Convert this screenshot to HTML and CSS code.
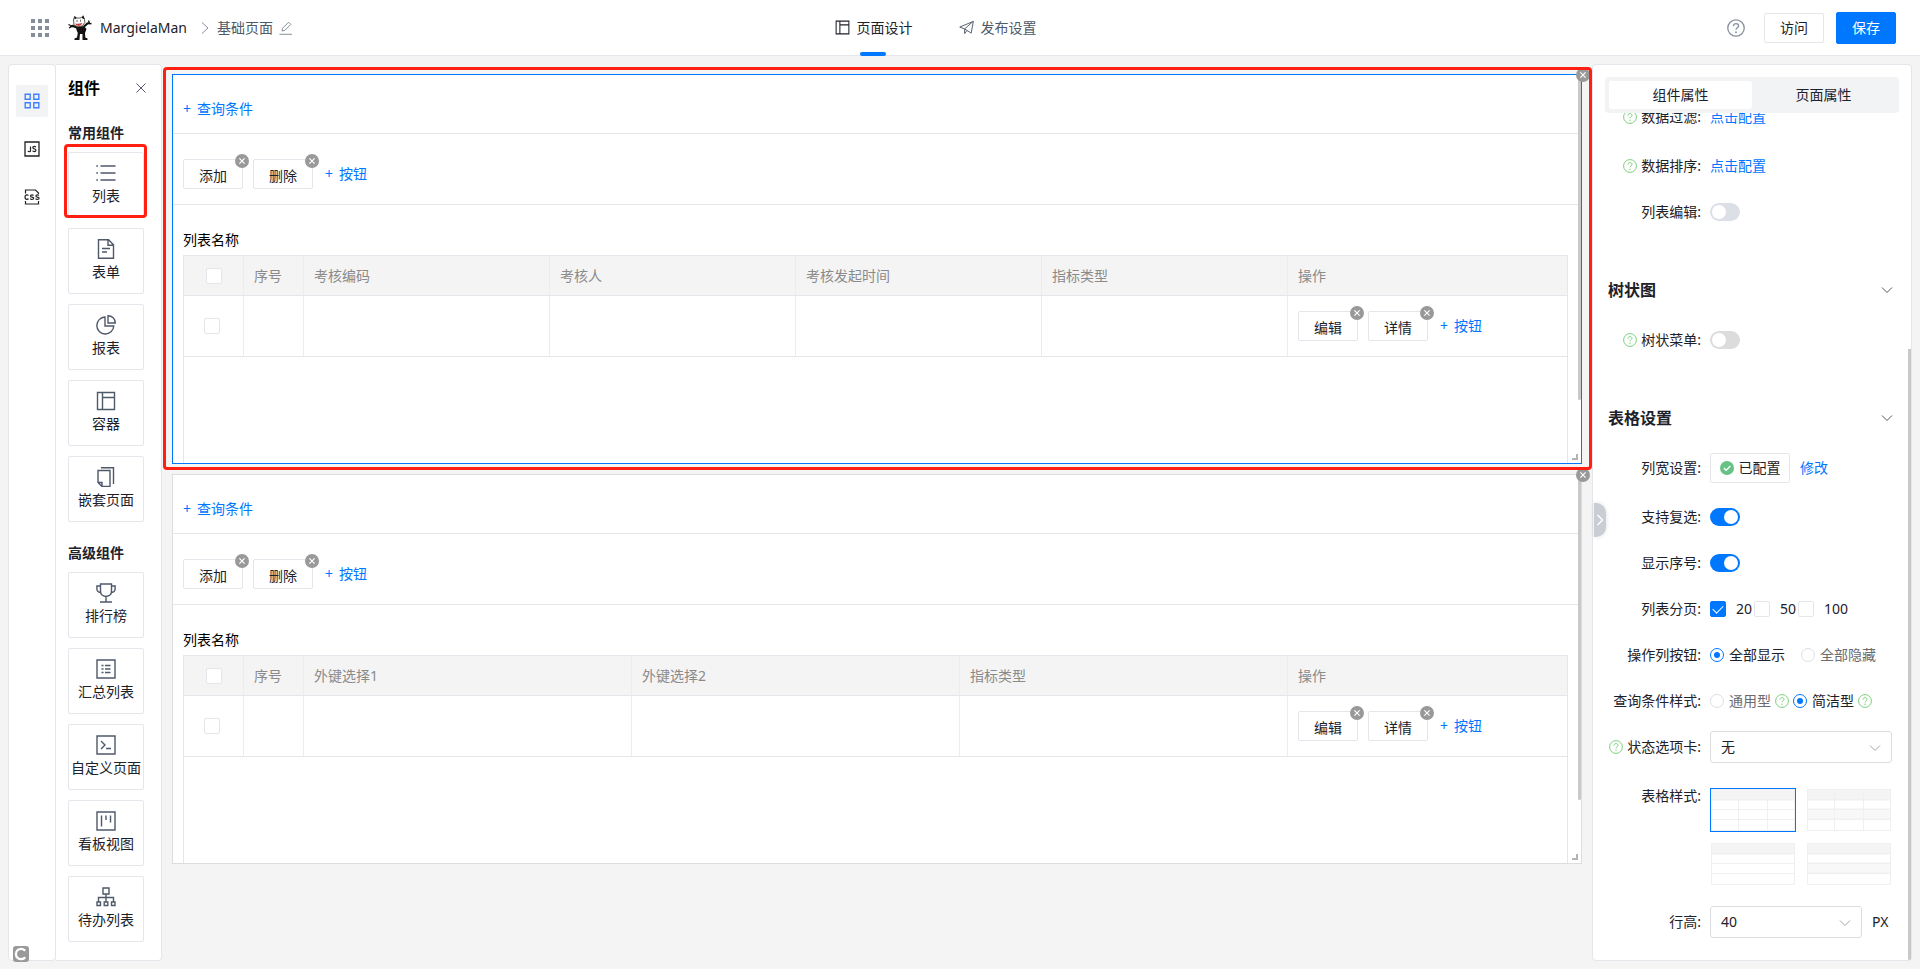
FILE: index.html
```html
<!DOCTYPE html>
<html lang="zh-CN">
<head>
<meta charset="utf-8">
<title>基础页面</title>
<link rel="stylesheet" href="styles.css">
</head>
<body>
<svg class="defs" aria-hidden="true">
  <symbol id="i-close" viewBox="0 0 14 14"><circle cx="7" cy="7" r="7" fill="#999"/><path d="M4.400 4.400l5.200 5.200M9.600 4.400l-5.200 5.200" stroke="#fff" stroke-width="1.200" fill="none"/></symbol>
  <symbol id="i-help" viewBox="0 0 14 14"><g fill="none" stroke="currentColor"><circle cx="7" cy="7" r="6.400"/><path d="M5 5.600c0-2.800 4-2.600 4-.2C9 6.800 7 6.800 7 8.400"/></g><circle cx="7" cy="10.300" r=".7" fill="currentColor"/></symbol>
  <symbol id="i-down" viewBox="0 0 12 12"><path d="M1 3.500l5 5 5-5" fill="none" stroke="currentColor"/></symbol>
  <symbol id="i-layout" viewBox="0 0 20 20"><path d="M1.500 1.500h17v17h-17zM6.500 1.500v17M6.500 6.500h12" fill="none" stroke="currentColor" stroke-width="1.400"/></symbol>
</svg>

<header class="topbar">
  <div class="brand">
    <svg class="dots" viewBox="0 0 18 18" fill="#86909c"><path d="M0 0h4v4H0zM7 0h4v4H7zM14 0h4v4h-4zM0 7h4v4H0zM7 7h4v4H7zM14 7h4v4h-4zM0 14h4v4H0zM7 14h4v4H7zM14 14h4v4h-4z"/></svg>
    <svg class="logo" viewBox="0 0 24 26">
      <path d="M8 12l8-1 2.500 3-1.500 4 .3 4.500 2.200 1V25h-5v-6h-2.500l-.5 4.500V25H6.500v-1.500l2.500-1 .8-4.500L8.500 15z" fill="#15110f"/>
      <path d="M9 12.500L4.500 11 2 11.500M16 11.500l3.500-3L22 8" fill="none" stroke="#15110f" stroke-width="2.200"/>
      <path d="M.5 9.500l2 1M1 13l2-1M20.500 5.500l.7 2M23.500 8.500l-2 .3" stroke="#15110f" stroke-width="1.300"/>
      <path d="M5.500 5L6.500 1.500 9 3.200l4-.4L15 .8l1.500 3.500.3 3.200-2.300 3.300-4.500 1-4-1.800z" fill="#fff" stroke="#333" stroke-width=".8"/>
      <path d="M6.500 1.200L8.800 3l-2.300 1.500zM15.200.5l1.500 4L13.600 3z" fill="#15110f"/>
      <path d="M9 5v2M12.500 4.700v2" stroke="#444" stroke-width=".8"/>
      <path d="M7 8.500q4 1 7.500-.8-1 3-3.800 3.200Q8 11 7 8.500z" fill="#d23a34"/>
    </svg>
    <span class="app">MargielaMan</span>
    <svg class="crumb" viewBox="0 0 8 12"><path d="M1 .5l6 5.500-6 5.500" fill="none" stroke="#86909c"/></svg>
    <span class="page">基础页面</span>
    <svg class="pencil" viewBox="0 0 14 14"><path d="M3 10l.6-2.800L9.600 1.200l2.200 2.200-6 6zM.5 13.300h12.500" fill="none" stroke="#86909c"/></svg>
  </div>
  <nav class="tabs">
    <a class="tab on" href="#design"><svg><use href="#i-layout"/></svg>页面设计</a>
    <a class="tab" href="#publish"><svg viewBox="0 0 16 16"><path d="M.8 7.500L15.300 1.500 13 14 6 9.500zM6 9.500L15 1.500M6 9.500v5l2.500-3.300" fill="none" stroke="currentColor"/></svg>发布设置</a>
  </nav>
  <div class="actions">
    <svg class="help"><use href="#i-help"/></svg>
    <button class="btn visit">访问</button>
    <button class="btn save">保存</button>
  </div>
</header>

<main class="work">
  <aside class="rail">
    <button class="railbtn on" aria-label="组件"><svg viewBox="0 0 16 16"><path d="M1.200 1.200h5v5h-5zM9.800 1.200h5v5h-5zM1.200 9.800h5v5h-5zM9.800 9.800h5v5h-5z" fill="none" stroke="#4080ff" stroke-width="1.400"/></svg></button>
    <button class="railbtn" aria-label="JS"><svg viewBox="0 0 16 16"><path d="M1 1h14v14H1z" fill="none" stroke="#222" stroke-width="1.300"/><path d="M6.500 5.500v4.200q0 1-1.200 1-1.100 0-1.300-.8M11.800 6.200q-.4-.8-1.500-.8-1.500 0-1.500 1.200 0 1.100 1.500 1.300 1.600.2 1.600 1.400 0 1.300-1.600 1.300-1.300 0-1.700-1" fill="none" stroke="#222" stroke-width="1.200"/></svg></button>
    <button class="railbtn" aria-label="CSS"><svg viewBox="0 0 16 16"><path d="M1.500 4.500v-3.500h10l3 3v1M1.500 12v3h13v-3" fill="none" stroke="#222" stroke-width="1.200"/><path d="M4.500 6.500q-.5-.7-1.600-.7Q1 5.800 1 8.100t1.900 2.300q1.100 0 1.600-.7M9.500 6.500q-.4-.7-1.500-.7-1.500 0-1.500 1.100T8 8.100q1.700.1 1.700 1.200T8 10.400q-1.300 0-1.800-.8M14.900 6.500q-.4-.7-1.500-.7-1.500 0-1.500 1.100t1.500 1.200q1.700.1 1.700 1.200t-1.700 1.100q-1.300 0-1.800-.8" fill="none" stroke="#222" stroke-width="1.200"/></svg></button>
    <span class="cmark"><svg viewBox="0 0 16 16"><path d="M12.200 4.800A5.200 5.200 0 1 0 12.200 11.200" fill="none" stroke="#fff" stroke-width="2.300"/></svg></span>
  </aside>

  <aside class="palette">
    <div class="palhead"><h2>组件</h2><button class="x" aria-label="关闭"><svg viewBox="0 0 10 10"><path d="M.5.5l9 9M9.500.5l-9 9" stroke="#4e5969" fill="none"/></svg></button></div>
    <h3>常用组件</h3>
    <div class="tiles">
      <button class="tile marked"><svg viewBox="0 0 20 20"><path d="M4.500 3h15M4.500 10h15M4.500 17h15M.3 3h1.600M.3 10h1.600M.3 17h1.600" /></svg>列表</button>
      <button class="tile"><svg viewBox="0 0 20 20"><path d="M2.500.7h10l5 5v13.600h-15zM12 .7v5.500h5.500M6 9.500h8M6 13h5"/></svg>表单</button>
      <button class="tile"><svg viewBox="0 0 20 20"><path d="M9 2a8.500 8.500 0 1 0 8.800 9H9zM12 .7v7.300h7.300A7.300 7.300 0 0 0 12 .7z"/></svg>报表</button>
      <button class="tile"><svg><use href="#i-layout"/></svg>容器</button>
      <button class="tile"><svg viewBox="0 0 20 20"><path d="M2 3.500h12v16H6l-4-4zM6 19v-3.500H2M5 .8h12.500V17"/></svg>嵌套页面</button>
    </div>
    <h3 class="second">高级组件</h3>
    <div class="tiles">
      <button class="tile"><svg viewBox="0 0 20 20"><path d="M4.500 1h11v7q0 5-5.500 5.500Q4.500 13 4.500 8zM4.500 3H.9v3q0 3 3.700 3.500M15.500 3h3.600v3q0 3-3.700 3.500M10 13.500V19M4 19h12"/></svg>排行榜</button>
      <button class="tile"><svg viewBox="0 0 20 20"><path d="M1 1h18v18H1zM5.500 6.500h2M9 6.500h5.500M5.500 10h2M9 10h5.500M5.500 13.500h2M9 13.500h5.500"/></svg>汇总列表</button>
      <button class="tile"><svg viewBox="0 0 20 20"><path d="M1 1h18v18H1zM5 6l4 4-4 4M10 13.500h5"/></svg>自定义页面</button>
      <button class="tile"><svg viewBox="0 0 20 20"><path d="M1 1h18v18H1zM5.500 4.500v11M10 4.500v4.500M14.500 4.500v7"/></svg>看板视图</button>
      <button class="tile"><svg viewBox="0 0 20 20"><path d="M7 1h6v6H7zM10 7v8M2.500 15v-4.500h15V15M1 15h3.500v3.500H1zM8.200 15h3.600v3.500H8.200zM15.500 15H19v3.500h-3.500z"/></svg>待办列表</button>
    </div>
  </aside>

  <section class="canvas">
    <div class="block selected">
      <div class="card">
        <div class="query"><button class="add"><span>+</span><span>查询条件</span></button></div>
        <div class="tools">
          <span class="item"><button class="btn">添加</button><svg class="del"><use href="#i-close"/></svg></span>
          <span class="item"><button class="btn">删除</button><svg class="del"><use href="#i-close"/></svg></span>
          <button class="add"><span>+</span><span>按钮</span></button>
        </div>
        <div class="listname">列表名称</div>
        <div class="tablebox">
          <table>
            <colgroup><col class="cnarrow"><col class="cnarrow"><col><col><col><col><col class="cop"></colgroup>
            <thead><tr><th><input type="checkbox" class="box" aria-label="全选"></th><th>序号</th><th>考核编码</th><th>考核人</th><th>考核发起时间</th><th>指标类型</th><th>操作</th></tr></thead>
            <tbody><tr><td><input type="checkbox" class="box" aria-label="选择"></td><td></td><td></td><td></td><td></td><td></td>
              <td><div class="ops"><span class="item"><button class="btn">编辑</button><svg class="del"><use href="#i-close"/></svg></span><span class="item"><button class="btn">详情</button><svg class="del"><use href="#i-close"/></svg></span><button class="add"><span>+</span><span>按钮</span></button></div></td></tr></tbody>
          </table>
        </div>
        <i class="thumb"></i><i class="grip"></i>
      </div>
      <svg class="del"><use href="#i-close"/></svg>
    </div>

    <div class="block">
      <div class="card">
        <div class="query"><button class="add"><span>+</span><span>查询条件</span></button></div>
        <div class="tools">
          <span class="item"><button class="btn">添加</button><svg class="del"><use href="#i-close"/></svg></span>
          <span class="item"><button class="btn">删除</button><svg class="del"><use href="#i-close"/></svg></span>
          <button class="add"><span>+</span><span>按钮</span></button>
        </div>
        <div class="listname">列表名称</div>
        <div class="tablebox">
          <table>
            <colgroup><col class="cnarrow"><col class="cnarrow"><col><col><col><col class="cop"></colgroup>
            <thead><tr><th><input type="checkbox" class="box" aria-label="全选"></th><th>序号</th><th>外键选择1</th><th>外键选择2</th><th>指标类型</th><th>操作</th></tr></thead>
            <tbody><tr><td><input type="checkbox" class="box" aria-label="选择"></td><td></td><td></td><td></td><td></td>
              <td><div class="ops"><span class="item"><button class="btn">编辑</button><svg class="del"><use href="#i-close"/></svg></span><span class="item"><button class="btn">详情</button><svg class="del"><use href="#i-close"/></svg></span><button class="add"><span>+</span><span>按钮</span></button></div></td></tr></tbody>
          </table>
        </div>
        <i class="thumb"></i><i class="grip"></i>
      </div>
      <svg class="del"><use href="#i-close"/></svg>
    </div>
  </section>

  <aside class="props">
    <button class="fold" aria-label="收起"><svg viewBox="0 0 8 12"><path d="M1.500 1l5 5-5 5" fill="none" stroke="#fff" stroke-width="1.400"/></svg></button>
    <div class="seg"><button class="on">组件属性</button><button>页面属性</button></div>
    <div class="form">
      <div class="row tall"><span class="lab"><svg class="q"><use href="#i-help"/></svg>数据过滤:</span><a href="#filter">点击配置</a></div>
      <div class="row"><span class="lab"><svg class="q"><use href="#i-help"/></svg>数据排序:</span><a href="#sort">点击配置</a></div>
      <div class="row"><label class="lab" for="s1">列表编辑:</label><input id="s1" type="checkbox" class="switch"></div>
      <div class="sect"><h4>树状图</h4><svg><use href="#i-down"/></svg></div>
      <div class="row"><label class="lab" for="s2"><svg class="q"><use href="#i-help"/></svg>树状菜单:</label><input id="s2" type="checkbox" class="switch plain"></div>
      <div class="sect"><h4>表格设置</h4><svg><use href="#i-down"/></svg></div>
      <div class="row tall"><span class="lab">列宽设置:</span><button class="btn conf"><svg viewBox="0 0 14 14"><circle cx="7" cy="7" r="7" fill="#67c285"/><path d="M3.800 7l2.300 2.300 4.300-4.300" fill="none" stroke="#fff" stroke-width="1.300"/></svg>已配置</button><a class="edit" href="#width">修改</a></div>
      <div class="row"><label class="lab" for="s3">支持复选:</label><input id="s3" type="checkbox" class="switch" checked></div>
      <div class="row"><label class="lab" for="s4">显示序号:</label><input id="s4" type="checkbox" class="switch" checked></div>
      <div class="row"><span class="lab">列表分页:</span><div class="checks"><label><input type="checkbox" class="box" checked>20</label><label><input type="checkbox" class="box">50</label><label><input type="checkbox" class="box">100</label></div></div>
      <div class="row"><span class="lab">操作列按钮:</span><div class="radios wide"><label><input type="radio" name="op" checked>全部显示</label><label><input type="radio" name="op"><span>全部隐藏</span></label></div></div>
      <div class="row"><span class="lab">查询条件样式:</span><div class="radios"><label><input type="radio" name="qs"><span>通用型</span></label><svg class="q"><use href="#i-help"/></svg><label><input type="radio" name="qs" checked>简洁型</label><svg class="q"><use href="#i-help"/></svg></div></div>
      <div class="row last"><label class="lab" for="st"><svg class="q"><use href="#i-help"/></svg>状态选项卡:</label><div class="select"><select id="st"><option>无</option></select><svg><use href="#i-down"/></svg></div></div>
      <div class="row styles"><span class="lab">表格样式:</span>
        <div class="thumbs">
          <button class="mini on" aria-label="样式一"><svg viewBox="0 0 84 42"><path d="M0 0h84v11H0z" fill="#f4f4f4"/><path d="M.5.5h83v41H.5zM0 10.500h84M0 20.500h84M0 30.500h84M27.500 11v31M56.500 11v31"/></svg></button>
          <button class="mini" aria-label="样式二"><svg viewBox="0 0 84 42"><path d="M0 0h84v11H0z" fill="#f4f4f4"/><path d="M0 20h84v10H0z" fill="#f8f8f8"/><path d="M.5.5h83v41H.5zM0 10.500h84M0 20.500h84M0 30.500h84M27.500 0v42M56.500 0v42"/></svg></button>
          <button class="mini" aria-label="样式三"><svg viewBox="0 0 84 42"><path d="M0 0h84v11H0z" fill="#f4f4f4"/><path d="M.5.5h83v41H.5zM0 10.500h84M0 20.500h84M0 30.500h84"/></svg></button>
          <button class="mini" aria-label="样式四"><svg viewBox="0 0 84 42"><path d="M0 0h84v11H0z" fill="#f4f4f4"/><path d="M0 20h84v10H0z" fill="#f8f8f8"/><path d="M.5.5h83v41H.5zM0 10.500h84M0 20.500h84M0 30.500h84"/></svg></button>
        </div></div>
      <div class="row"><label class="lab" for="rh">行高:</label><div class="select px"><select id="rh"><option>40</option></select><svg><use href="#i-down"/></svg></div><span class="unit">PX</span></div>
    </div>
    <i class="thumb"></i>
  </aside>
</main>
</body>
</html>
```
FILE: styles.css
```css
* { box-sizing: border-box; }
body {
  margin: 0; height: 100vh; display: flex; flex-direction: column; overflow: hidden;
  background: #f4f4f4; color: #1d2129;
  font: 14px/22px "Noto Sans", "Noto Sans CJK SC", sans-serif;
}
button, select, input { font: inherit; color: inherit; margin: 0; }
button { background: none; border: 0; padding: 0; white-space: nowrap; }
a { color: #0077ff; text-decoration: none; }
svg { display: block; flex: none; }
h2, h3, h4 { margin: 0; }
.defs { position: absolute; width: 0; height: 0; }

.topbar {
  flex: none; height: 56px; padding: 0 24px 0 31px; background: #fff; border-bottom: 1px solid #e5e6eb;
  display: grid; grid-template-columns: 1fr auto 1fr; align-items: center;
}
.brand { display: flex; align-items: center; }
.dots { width: 18px; height: 18px; }
.logo { width: 24px; height: 26px; margin: 0 8px 0 19px; }
.crumb { width: 8px; height: 12px; margin: 0 8px 0 14px; }
.page { color: #4e5969; }
.pencil { width: 14px; height: 14px; margin-left: 6px; }
.tabs { display: flex; gap: 46px; height: 55px; margin-right: 56px; }
.tab { position: relative; display: flex; align-items: center; gap: 7px; color: #4e5969; }
.tab svg { width: 15px; height: 15px; }
.tab.on { color: #1d2129; }
.tab.on::after { content: ""; position: absolute; left: 25px; bottom: -1px; width: 26px; height: 4px; border-radius: 2px; background: #0077ff; }
.actions { display: flex; align-items: center; justify-content: flex-end; gap: 12px; }
.help { width: 18px; height: 18px; color: #86909c; margin-right: 7px; }
.btn { width: 60px; height: 30px; border: 1px solid #e5e6eb; border-radius: 2px; background: #fff; }
.save { height: 32px; background: #0077ff; border-color: #0077ff; color: #fff; }

.work { flex: 1; min-height: 0; display: flex; padding: 8px; }
.rail { position: relative; width: 48px; flex: none; background: #fff; border: 1px solid #e5e6eb; border-radius: 4px; padding-top: 20px; display: flex; flex-direction: column; align-items: center; gap: 16px; }
.railbtn { width: 32px; height: 32px; border-radius: 2px; display: grid; place-items: center; }
.railbtn.on { background: #f2f3f5; }
.railbtn svg { width: 16px; height: 16px; }
.cmark { position: absolute; left: 4px; bottom: -2px; width: 16px; height: 16px; border-radius: 3px; background: #999; }
.palette { width: 106px; flex: none; background: #fff; border: 1px solid #e5e6eb; border-left: 0; border-radius: 0 4px 4px 0; padding: 11px 17px 0 12px; }
.palhead { display: flex; justify-content: space-between; align-items: center; margin-right: -2px; }
.palhead h2 { font-size: 16px; line-height: 24px; color: #000; }
.x svg { width: 10px; height: 10px; }
.palette h3 { font-size: 14px; line-height: 22px; margin: 22px 0 8px; }
.palette h3.second { margin: 20px 0 8px; }
.tiles { display: grid; gap: 10px; }
.tile { position: relative; height: 66px; border: 1px solid #e5e6eb; border-radius: 2px; background: #fff; display: flex; flex-direction: column; align-items: center; gap: 2px; padding-top: 10px; }
.tile svg { width: 20px; height: 20px; fill: none; stroke: #4e5969; stroke-width: 1.4; color: #4e5969; }
.marked::after { content: ""; position: absolute; inset: -9px -4px -1px -5px; border: 3px solid #ff2012; border-radius: 4px; }

.canvas { flex: 1; min-width: 0; display: flex; flex-direction: column; gap: 10px; padding: 10px 10px 0; }
.block { position: relative; }
.card { position: relative; height: 390px; overflow: hidden; background: #fff; border: 1px solid #dcdde0; }
.selected .card { border-color: #0077ff; }
.selected::after { content: ""; position: absolute; z-index: 2; inset: -7px -10px -6px -9px; border: 3px solid #ff2012; border-radius: 4px; pointer-events: none; }
.del { position: absolute; z-index: 1; width: 14px; height: 14px; top: -5px; right: -6px; }
.block > .del { right: -8px; top: -6px; }
.query, .tools { display: flex; align-items: center; padding: 10px 10px 0; border-bottom: 1px solid #e5e6eb; }
.query { height: 59px; }
.tools { height: 71px; gap: 10px; }
.add { color: #0077ff; display: inline-flex; gap: 6px; }
.item { position: relative; display: flex; }
.item .btn { padding-top: 3px; }
.item + .add { margin-left: 2px; }
.listname { padding: 24px 10px 4px; color: #000; }
.tablebox { margin: 0 13px 0 10px; height: 400px; border: 1px solid #e5e6eb; }
table { width: 100%; table-layout: fixed; border-collapse: separate; border-spacing: 0; }
.cnarrow { width: 60px; }
.cop { width: 279px; }
th, td { border-bottom: 1px solid #e5e6eb; border-right: 1px solid #ebebf0; padding: 0 10px; text-align: left; font-weight: 400; }
th { height: 40px; background: #f4f4f4; color: #8a8a8a; }
td { height: 61px; }
th:first-child { padding-left: 22px; }
td:first-child { padding-left: 20px; }
th:last-child, td:last-child { border-right: 0; }
.ops { display: flex; align-items: center; gap: 10px; }
.box { appearance: none; display: block; flex: none; width: 16px; height: 16px; border: 1px solid #e5e6eb; border-radius: 2px; background: #fff; }
.box:checked { border-color: #0077ff; background: #0077ff; display: grid; place-items: center; }
.box:checked::after { content: ""; width: 9px; height: 5px; margin-bottom: 3px; border: solid #fff; border-width: 0 0 1px 1px; transform: rotate(-45deg); }
.thumb { position: absolute; right: 0; top: 0; width: 3px; height: 325px; background: #c9c9c9; border-radius: 0 0 2px 2px; }
.grip { position: absolute; right: 3px; bottom: 3px; width: 6px; height: 6px; border: solid #b4b4b4; border-width: 0 2px 2px 0; }

.props { position: relative; width: 320px; flex: none; background: #fff; border: 1px solid #e5e6eb; border-radius: 4px; padding: 12px; }
.props .thumb { top: 284px; bottom: 0; height: auto; }
.fold { position: absolute; left: 1px; top: 438px; width: 12px; height: 34px; background: #c9cdd4; border-radius: 0 10px 10px 0; display: grid; place-items: center; box-shadow: 0 0 4px #0002; }
.fold svg { width: 8px; height: 12px; }
.seg { position: relative; z-index: 1; display: grid; grid-template-columns: 1fr 1fr; padding: 4px; background: #f2f3f5; border-radius: 4px; }
.seg button { height: 28px; border-radius: 3px; }
.seg .on { background: #fff; }
.form { margin-top: -12px; }
.row { display: flex; align-items: center; min-height: 32px; margin-bottom: 14px; }
.row.tall { margin-bottom: 17px; }
.row.last { margin-bottom: 25px; }
.lab { width: 96px; flex: none; margin-right: 9px; display: flex; align-items: center; justify-content: flex-end; gap: 4px; white-space: nowrap; }
.q { width: 14px; height: 14px; color: #7ccf7c; }
.sect { display: flex; justify-content: space-between; align-items: center; height: 32px; margin: 46px 6px 18px 3px; }
.sect h4 { font-size: 16px; line-height: 24px; }
.sect svg { width: 12px; height: 12px; color: #4e5969; }
.switch { appearance: none; width: 30px; height: 18px; border-radius: 9px; background: #dcdfe6; padding: 2px; display: flex; }
.switch.plain { background: #dcdcdc; }
.switch::after { content: ""; width: 14px; height: 14px; border-radius: 50%; background: #fff; }
.switch:checked { background: #0077ff; justify-content: flex-end; }
.conf { width: 80px; display: flex; align-items: center; justify-content: center; gap: 5px; }
.conf svg { width: 14px; height: 14px; }
.edit { margin-left: 10px; }
.checks { display: flex; gap: 2px; }
.checks label { display: flex; align-items: center; gap: 10px; }
.radios { display: flex; align-items: center; gap: 4px; white-space: nowrap; }
.radios.wide { gap: 16px; }
.radios label { display: flex; align-items: center; gap: 5px; }
.radios label span { color: #6b6b70; }
.radios input { appearance: none; width: 14px; height: 14px; border: 1px solid #dcdfe6; border-radius: 50%; background: #fff; display: grid; place-items: center; }
.radios input:checked { border-color: #0077ff; }
.radios input:checked::after { content: ""; width: 6px; height: 6px; border-radius: 50%; background: #0077ff; }
.select { position: relative; width: 182px; }
.select.px { width: 152px; }
.select select { appearance: none; width: 100%; height: 32px; padding: 0 10px; border: 1px solid #dcdde0; border-radius: 3px; background: #fff; display: block; }
.select svg { position: absolute; right: 11px; top: 11px; width: 12px; height: 12px; color: #a0a4ab; pointer-events: none; }
.unit { margin-left: 10px; }
.row.styles { align-items: flex-start; margin-bottom: 20px; }
.styles .lab { margin-top: -3px; }
.thumbs { display: grid; grid-template-columns: auto auto; gap: 10px; }
.mini { padding: 0; border: 1px solid transparent; }
.mini.on { border-color: #0077ff; }
.mini svg { width: 84px; height: 42px; fill: none; stroke: #f0f0f0; }
```
